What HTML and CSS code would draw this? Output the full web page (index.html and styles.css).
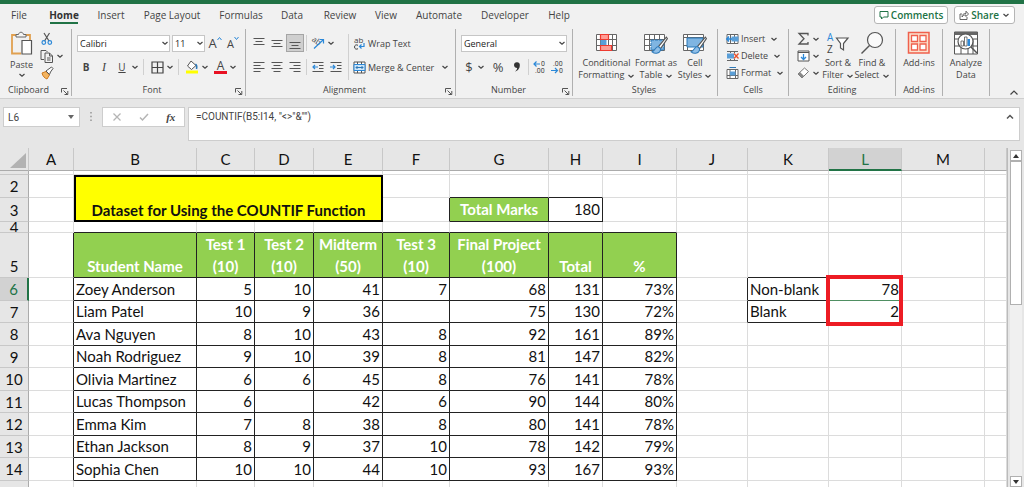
FILE: index.html
```html
<!DOCTYPE html>
<html lang="en">
<head>
<meta charset="utf-8">
<title>Workbook</title>
<link rel="stylesheet" href="styles.css">
</head>
<body>
<svg class="defs" aria-hidden="true">
  <symbol id="chev" viewBox="0 0 8 8"><path d="M1.5 3l2.5 2.3L6.500 3" fill="none" stroke="#444" stroke-width="1.2"/></symbol>
  <symbol id="launch" viewBox="0 0 8 8"><path d="M.5 5.500V1.500H6M2.500 3.500L6.500 7.500M6.800 4v3.500H3.500" fill="none" stroke="#555" stroke-width="1"/></symbol>
  <symbol id="brush" viewBox="0 0 16 18"><path d="M14.500 1L7 10l2 2 6.500-9.500z" fill="#fff" stroke="#555" stroke-width="1"/><path d="M7 10c-3 0-3 4-6 5 3 2.500 8 1.500 8-3z" fill="#8fbfe8" stroke="#2b78b8" stroke-width="1"/></symbol>
</svg>
<div class="app">
  <div class="titlebar"></div>
  <nav class="tabs">
    <button class="tab file">File</button><button class="tab home active">Home</button><button class="tab insert">Insert</button><button class="tab layout">Page Layout</button><button class="tab formulas">Formulas</button><button class="tab data">Data</button><button class="tab review">Review</button><button class="tab view">View</button><button class="tab automate">Automate</button><button class="tab developer">Developer</button><button class="tab help">Help</button>
    <div class="tab-actions">
      <button class="pill"><svg width="10" height="10" viewBox="0 0 10 10"><path d="M1 1.500h8v5.500H4.500L2.500 9V7H1z" fill="none" stroke="#217346"/></svg>Comments</button>
      <button class="pill"><svg width="10" height="10" viewBox="0 0 10 10"><path d="M3 4H1v5.500h7V7M3 7c0-2.500 1.500-3.500 4-3.500V1.200L9.500 4 7 6.500V5C5 5 4 5.500 3 7z" fill="none" stroke="#555" stroke-width=".9"/></svg>Share<svg class="chev share-chev"><use href="#chev"/></svg></button>
    </div>
  </nav>

  <div class="ribbon">
    <section class="group g-clip">
      <div class="tools">
        <button class="big paste"><svg width="24" height="26" viewBox="0 0 24 26"><path d="M7 4H2v18.500h9M15 4h5v5" fill="none" stroke="#e0a050" stroke-width="1.800"/><path d="M6 6V3.500h2.500C9 .5 13 .5 13.500 3.500H16V6z" fill="#f5f5f5" stroke="#666"/><path d="M12 9.500h9.500V23H12z" fill="#fff" stroke="#555" stroke-width="1.200"/></svg><span>Paste</span><svg class="chev"><use href="#chev"/></svg></button>
        <div class="stack">
          <button class="row"><svg width="14" height="14" viewBox="0 0 14 14"><path d="M4 1l5 8M9.500 1l-5 8" stroke="#555" stroke-width="1.200"/><circle cx="3.800" cy="10.500" r="1.800" fill="none" stroke="#2b88d8" stroke-width="1.200"/><circle cx="9.800" cy="10.500" r="1.800" fill="none" stroke="#2b88d8" stroke-width="1.200"/></svg></button>
          <button class="row"><svg width="14" height="14" viewBox="0 0 14 14"><path d="M4 10.500H1V1.500h5l1.500 1.500M5 4h4.500l3 3v6.500H5zM9.500 4v3h3M7 9h3.500M7 11h3.500" fill="none" stroke="#555"/></svg><svg class="chev"><use href="#chev"/></svg></button>
          <button class="row"><svg width="14" height="14" viewBox="0 0 14 14"><path d="M2 7l4-1.500 3.500 3.500L7 13C5 12.500 2.500 10 2 7z" fill="#f3b562" stroke="#d07a20"/><path d="M6 5l2-1.500L11.500 1 13 2.500 10.500 6 9.500 8.500z" fill="#fff" stroke="#555"/></svg></button>
        </div>
      </div>
      <footer>Clipboard<svg class="launch"><use href="#launch"/></svg></footer>
    </section>

    <section class="group g-font">
      <div class="tools rows">
        <div class="line">
          <span class="combo font-name"><select aria-label="Font"><option>Calibri</option></select><svg class="chev"><use href="#chev"/></svg></span>
          <span class="combo font-size"><select aria-label="Font size"><option>11</option></select><svg class="chev"><use href="#chev"/></svg></span>
          <button class="ib grow">A<svg width="5" height="5" viewBox="0 0 5 5"><path d="M.5 4l2-2.500 2 2.500" fill="none" stroke="#2b88d8"/></svg></button>
          <button class="ib shrink">A<svg width="5" height="5" viewBox="0 0 5 5"><path d="M.5 1l2 2.500 2-2.500" fill="none" stroke="#2b88d8"/></svg></button>
        </div>
        <div class="line">
          <button class="ib bold">B</button><button class="ib italic">I</button><button class="ib under">U</button><svg class="chev"><use href="#chev"/></svg><i class="sep"></i>
          <button class="ib"><svg width="13" height="13" viewBox="0 0 13 13"><path d="M1 1h11v11H1zM6.500 1v11M1 6.500h11" fill="none" stroke="#444" stroke-width="1.200"/></svg></button><svg class="chev"><use href="#chev"/></svg><i class="sep"></i>
          <button class="ib"><svg width="14" height="14" viewBox="0 0 14 14"><path d="M6 1l5 4.500L6.500 9.500 2.500 6z" fill="#fff" stroke="#555"/><path d="M10.500 4c1.500 1 1.500 3 1 5" fill="none" stroke="#2b78b8" stroke-width="1.500"/><path d="M1 10.500h12v3H1z" fill="#ff0"/></svg></button><svg class="chev"><use href="#chev"/></svg>
          <button class="ib color">A</button><svg class="chev"><use href="#chev"/></svg>
        </div>
      </div>
      <footer>Font<svg class="launch"><use href="#launch"/></svg></footer>
    </section>

    <section class="group g-align">
      <div class="tools">
        <div class="rows">
          <div class="line">
            <button class="ib"><svg width="12" height="12" viewBox="0 0 12 12"><path d="M.5 1.500h11M2.500 4.500h7M.5 7.500h11" stroke="#555"/></svg></button>
            <button class="ib"><svg width="12" height="12" viewBox="0 0 12 12"><path d="M.5 3.500h11M2.500 6.500h7M.5 9.500h11" stroke="#555"/></svg></button>
            <button class="ib on"><svg width="12" height="12" viewBox="0 0 12 12"><path d="M.5 5.500h11M2.500 8.500h7M.5 11.500h11" stroke="#555"/></svg></button><i class="sep"></i>
            <button class="ib"><svg width="14" height="14" viewBox="0 0 14 14"><text x="0" y="7" font-family="Open Sans" font-size="8" fill="#444" transform="rotate(35 4 6)">ab</text><path d="M3 12.500L12 4M8.500 3.500h4v4" fill="none" stroke="#2b88d8" stroke-width="1.200"/></svg></button><svg class="chev"><use href="#chev"/></svg>
          </div>
          <div class="line">
            <button class="ib"><svg width="12" height="12" viewBox="0 0 12 12"><path d="M.5 1.500h11M.5 4.500h7M.5 7.500h11M.5 10.500h7" stroke="#555"/></svg></button>
            <button class="ib"><svg width="12" height="12" viewBox="0 0 12 12"><path d="M.5 1.500h11M2.500 4.500h7M.5 7.500h11M2.500 10.500h7" stroke="#555"/></svg></button>
            <button class="ib"><svg width="12" height="12" viewBox="0 0 12 12"><path d="M.5 1.500h11M4.500 4.500h7M.5 7.500h11M4.500 10.500h7" stroke="#555"/></svg></button><i class="sep"></i>
            <button class="ib"><svg width="12" height="12" viewBox="0 0 12 12"><path d="M.5 1.500h11M7 4.500h4.500M7 7.500h4.500M.5 10.500h11" stroke="#555"/><path d="M6 6H1M3 4L1 6l2 2" fill="none" stroke="#2b88d8" stroke-width="1.200"/></svg></button>
            <button class="ib"><svg width="12" height="12" viewBox="0 0 12 12"><path d="M.5 1.500h11M7 4.500h4.500M7 7.500h4.500M.5 10.500h11" stroke="#555"/><path d="M0 6h5M3 4l2 2-2 2" fill="none" stroke="#2b88d8" stroke-width="1.200"/></svg></button>
          </div>
        </div>
        <i class="sep tall"></i>
        <div class="rows">
          <div class="line"><button class="row"><svg width="13" height="14" viewBox="0 0 13 14"><text x="1" y="7" font-family="Open Sans" font-size="8" fill="#444">ab</text><path d="M5 9.300c-1.500-1-3.500-.3-3.500 1.700s2 2.700 3.500 1.700" fill="none" stroke="#444"/><path d="M11 7v3.500H6.500M8.500 8.500l-2 2 2 2" fill="none" stroke="#2b88d8" stroke-width="1.200"/></svg>Wrap Text</button></div>
          <div class="line"><button class="row"><svg width="13" height="13" viewBox="0 0 13 13"><path d="M1 1h11v11H1zM4.500 1v3M8.500 1v3M4.500 9v3M8.500 9v3" fill="#fff" stroke="#555"/><path d="M1 3.500h11v6H1z" fill="#cfe6f8" stroke="#2b88d8"/><path d="M3 6.500h7M4.500 5L3 6.500 4.500 8M8.500 5L10 6.500 8.500 8" fill="none" stroke="#2b78b8"/></svg>Merge &amp; Center<svg class="chev far"><use href="#chev"/></svg></button></div>
        </div>
      </div>
      <footer>Alignment<svg class="launch"><use href="#launch"/></svg></footer>
    </section>

    <section class="group g-num">
      <div class="tools rows">
        <div class="line"><span class="combo format"><select aria-label="Number format"><option>General</option></select><svg class="chev"><use href="#chev"/></svg></span></div>
        <div class="line">
          <button class="ib sym">$</button><svg class="chev"><use href="#chev"/></svg><button class="ib sym pct">%</button>
          <button class="ib comma"><svg width="8" height="12" viewBox="0 0 8 12"><path d="M1 4a2.800 2.800 0 1 1 5.800.5C6.800 7.500 4.500 10 2 10.500c1.200-1 2-2 2.200-3.500C2.500 7 1 6 1 4z" fill="#333"/></svg></button><i class="sep"></i>
          <button class="ib"><svg width="14" height="14" viewBox="0 0 14 14"><text x="8" y="6" font-family="Roboto" font-size="7" fill="#444">0</text><text x="2" y="13" font-family="Roboto" font-size="7" fill="#444">.00</text><path d="M7 4H1M3.500 1.500L1 4l2.500 2.500" fill="none" stroke="#2b88d8" stroke-width="1.200"/></svg></button>
          <button class="ib"><svg width="14" height="14" viewBox="0 0 14 14"><text x="2" y="6" font-family="Roboto" font-size="7" fill="#444">.00</text><text x="8" y="13" font-family="Roboto" font-size="7" fill="#444">0</text><path d="M0 10.500h6M4 8l2.500 2.500L4 13" fill="none" stroke="#2b88d8" stroke-width="1.200"/></svg></button>
        </div>
      </div>
      <footer>Number<svg class="launch"><use href="#launch"/></svg></footer>
    </section>

    <section class="group g-styles">
      <div class="tools">
        <button class="big w-cond"><svg width="24" height="24" viewBox="0 0 24 24"><path d="M1.500 3.500h20v16h-20zM5.500 3.500v16M9.500 3.500v16M13.500 3.500v16M17.500 3.500v16M1.500 8.500h20M1.500 14.500h20" fill="#fff" stroke="#666"/><path d="M5.500 3.500h8v5h-8zM5.500 14.500h11v5h-11z" fill="#ff9c94" stroke="#ee3a30" stroke-width="1.200"/><path d="M5.500 9h6v5h-6z" fill="#5a9fd8"/></svg><span>Conditional<br>Formatting <svg class="chev"><use href="#chev"/></svg></span></button>
        <button class="big w-fmt"><svg width="26" height="24" viewBox="0 0 26 24"><path d="M1.500 3.500h20v16h-20zM6.500 3.500v16M11.500 3.500v16M16.500 3.500v16M1.500 8.500h20M1.500 14.500h20" fill="#fff" stroke="#666"/><path d="M8 9h13v10H8z" fill="#7fb5e2" stroke="#2b78b8" stroke-dasharray="3 1"/><use href="#brush" x="8" y="5" width="17" height="19"/></svg><span>Format as<br>Table <svg class="chev"><use href="#chev"/></svg></span></button>
        <button class="big w-cell"><svg width="26" height="24" viewBox="0 0 26 24"><path d="M1.500 3.500h20v16h-20zM5.500 3.500v16M1.500 6.500h20M1.500 14.500h20" fill="#fff" stroke="#666"/><path d="M5 7h16v9H5z" fill="#7fb5e2" stroke="#2b78b8"/><use href="#brush" x="8" y="5" width="17" height="19"/></svg><span>Cell<br>Styles <svg class="chev"><use href="#chev"/></svg></span></button>
      </div>
      <footer>Styles</footer>
    </section>

    <section class="group g-cells">
      <div class="tools">
        <div class="stack">
          <button class="row"><svg width="13" height="12" viewBox="0 0 13 12"><path d="M1 1.500h11v9H1zM4.500 1.500v9M8.500 1.500v9" fill="#fff" stroke="#666"/><path d="M5.500 3.500h7v5h-7z" fill="#5a9fd8"/><path d="M6 6H1M3 3.500L.8 6 3 8.500" fill="none" stroke="#2b88d8" stroke-width="1.500"/></svg>Insert<svg class="chev"><use href="#chev"/></svg></button>
          <button class="row"><svg width="13" height="12" viewBox="0 0 13 12"><path d="M1 1.500h11M1 10.500h11M4.500 1v2M8.500 1v2M4.500 9v2M8.500 9v2" fill="none" stroke="#666"/><path d="M1 3.500h7v5H1z" fill="#5a9fd8"/><path d="M8 3.500l4.500 5M12.500 3.500L8 8.500" stroke="#e8502c" stroke-width="1.300"/></svg>Delete<svg class="chev"><use href="#chev"/></svg></button>
          <button class="row"><svg width="13" height="12" viewBox="0 0 13 12"><path d="M1 2.500h11v9H1zM4 2v9M9.500 2v9M1 8.500h11" fill="#fff" stroke="#666"/><path d="M4 4.500h5.500v4H4z" fill="#5a9fd8"/><path d="M3.500.5h6.500" stroke="#2b78b8"/></svg>Format<svg class="chev"><use href="#chev"/></svg></button>
        </div>
      </div>
      <footer>Cells</footer>
    </section>

    <section class="group g-edit">
      <div class="tools">
        <div class="stack">
          <button class="row"><svg width="13" height="14" viewBox="0 0 13 14"><path d="M11 3.500V1.500H2l5 5.300L2 12h9v-2" fill="none" stroke="#555" stroke-width="1.300"/></svg><svg class="chev"><use href="#chev"/></svg></button>
          <button class="row"><svg width="13" height="12" viewBox="0 0 13 12"><path d="M1 1h11v10H1zM1 2.500h11" fill="#fff" stroke="#555"/><path d="M6.500 4v5.500M4 7l2.500 2.500L9 7" fill="none" stroke="#2b88d8" stroke-width="1.300"/></svg><svg class="chev"><use href="#chev"/></svg></button>
          <button class="row"><svg width="13" height="12" viewBox="0 0 13 12"><path d="M1 7l6.500-6 4 3.500L5 11z" fill="#fff" stroke="#777"/><path d="M1 7l2-2 4 4-2 2z" fill="#888"/></svg><svg class="chev"><use href="#chev"/></svg></button>
        </div>
        <button class="big w-sort"><svg width="24" height="24" viewBox="0 0 24 24"><text x="1" y="10" font-family="Open Sans" font-size="10" fill="#2b88d8">A</text><text x="1" y="22" font-family="Open Sans" font-size="10" fill="#444">Z</text><path d="M10.500 7h11.500l-4.500 5.500V19l-3-2v-4.500z" fill="#fff" stroke="#555" stroke-width="1.200"/></svg><span>Sort &amp;<br>Filter <svg class="chev"><use href="#chev"/></svg></span></button>
        <button class="big w-find"><svg width="26" height="24" viewBox="0 0 26 24"><circle cx="16" cy="9" r="7.500" fill="#fafafa" stroke="#555" stroke-width="1.200"/><path d="M10.500 14.500L2.500 22.500" stroke="#555" stroke-width="1.400"/></svg><span>Find &amp;<br>Select <svg class="chev"><use href="#chev"/></svg></span></button>
      </div>
      <footer>Editing</footer>
    </section>

    <section class="group g-add">
      <div class="tools"><button class="big w-add"><svg width="24" height="24" viewBox="0 0 24 24"><path d="M1.500 1.500h20.500v20.500H1.500z" fill="#fbe3cf" stroke="#f0604c" stroke-width="1.500"/><path d="M4.500 4.500h6v6h-6zM13 4.500h6v6h-6zM4.500 13h6v6h-6zM13 13h6v6h-6z" fill="#fff" stroke="#f0604c" stroke-width="1.300"/></svg><span>Add-ins</span></button></div>
      <footer>Add-ins</footer>
    </section>

    <section class="group g-analyze">
      <div class="tools"><button class="big w-add"><svg width="26" height="24" viewBox="0 0 26 24"><path d="M1.500 1h23v22h-23zM1.500 8h23M1.500 15h23M8 15v8M15 15v8M20 8v15" fill="#fff" stroke="#555"/><path d="M1.500 1h23v3h-23z" fill="#666"/><circle cx="12.500" cy="10.500" r="7.500" fill="#fff" stroke="#555" stroke-width="1.200"/><path d="M8 10h2.500v5H8zM11.500 6h2.500v9h-2.500z" fill="#fff" stroke="#555" stroke-width=".8"/><path d="M14.500 8H17v7h-2.500z" fill="#2b88d8"/><path d="M18 16l6 6" stroke="#555" stroke-width="1.500"/></svg><span>Analyze<br>Data</span></button></div>
      <footer></footer>
    </section>
    <button class="collapse" aria-label="Collapse ribbon"><svg width="8" height="6" viewBox="0 0 8 6"><path d="M.5 4.500L4 1l3.500 3.500" fill="none" stroke="#444" stroke-width="1.200"/></svg></button>
  </div>

  <div class="formula-bar">
    <div class="namebox"><input aria-label="Name box" value="L6"><svg width="6" height="4" viewBox="0 0 6 4"><path d="M0 0h6L3 4z" fill="#666"/></svg></div>
    <svg class="dots" width="2" height="9" viewBox="0 0 2 9"><path d="M0 0h2v1.500H0zM0 3.700h2v1.500H0zM0 7.400h2v1.500H0z" fill="#aaa"/></svg>
    <div class="fx">
      <button aria-label="Cancel"><svg width="10" height="10" viewBox="0 0 10 10"><path d="M1.500 1.500l7 7M8.500 1.500l-7 7" stroke="#b5b5b5" stroke-width="1.300"/></svg></button>
      <button aria-label="Enter"><svg width="10" height="10" viewBox="0 0 10 10"><path d="M1 5.500L3.500 8 9 2" fill="none" stroke="#b5b5b5" stroke-width="1.500"/></svg></button>
      <button class="fn">fx</button>
    </div>
    <div class="formula"><textarea aria-label="Formula">=COUNTIF(B5:I14, "&lt;&gt;"&amp;"")</textarea><svg width="8" height="6" viewBox="0 0 8 6"><path d="M1 4.500L4 1.500l3 3" fill="none" stroke="#555" stroke-width="1.500"/></svg></div>
  </div>

  <div class="sheet">
    <table>
      <colgroup><col class="c-num"><col class="c-a"><col class="c-b"><col class="c-c"><col class="c-d"><col class="c-e"><col class="c-f"><col class="c-g"><col class="c-h"><col class="c-i"><col class="c-j"><col class="c-k"><col class="c-l"><col class="c-m"><col></colgroup>
      <thead><tr><th><svg width="16" height="15" viewBox="0 0 16 15"><path d="M16 0v15H0z" fill="#b2b2b2"/></svg></th><th>A</th><th>B</th><th>C</th><th>D</th><th>E</th><th>F</th><th>G</th><th>H</th><th>I</th><th>J</th><th>K</th><th class="sel">L</th><th>M</th><th></th></tr></thead>
      <tbody>
      <tr class="sliver"><th></th><td></td><td></td><td></td><td></td><td></td><td></td><td></td><td></td><td></td><td></td><td></td><td></td><td></td><td></td></tr>
      <tr class="odd"><th>2</th><td></td><td class="title" colspan="4" rowspan="2">Dataset for Using the COUNTIF Function</td><td></td><td class="kb"></td><td class="kb"></td><td></td><td></td><td></td><td></td><td></td><td></td></tr>
      <tr class="r3"><th>3</th><td></td><td class="kr"></td><td class="head kr kb mid">Total Marks</td><td class="kr kb">180</td><td></td><td></td><td></td><td></td><td></td><td></td></tr>
      <tr class="r4"><th><span>4</span></th><td></td><td class="kb"></td><td class="kb"></td><td class="kb"></td><td class="kb"></td><td class="kb"></td><td class="kb"></td><td class="kb"></td><td class="kb"></td><td></td><td></td><td></td><td></td><td></td></tr>
      <tr class="rec hrow"><th>5</th><td></td><td>Student Name</td><td>Test 1<br>(10)</td><td>Test 2<br>(10)</td><td>Midterm<br>(50)</td><td>Test 3<br>(10)</td><td>Final Project<br>(100)</td><td>Total</td><td>%</td><td></td><td class="kb"></td><td></td><td></td><td></td></tr>
      <tr class="rec odd"><th class="sel">6</th><td></td><td>Zoey Anderson</td><td>5</td><td>10</td><td>41</td><td>7</td><td>68</td><td>131</td><td>73%</td><td class="kr"></td><td class="name kr kb">Non-blank</td><td class="result">78<span class="marker"></span></td><td></td><td></td></tr>
      <tr class="rec"><th>7</th><td></td><td>Liam Patel</td><td>10</td><td>9</td><td>36</td><td></td><td>75</td><td>130</td><td>72%</td><td class="kr"></td><td class="name kr kb">Blank</td><td>2</td><td></td><td></td></tr>
      <tr class="rec odd"><th>8</th><td></td><td>Ava Nguyen</td><td>8</td><td>10</td><td>43</td><td>8</td><td>92</td><td>161</td><td>89%</td><td></td><td></td><td></td><td></td><td></td></tr>
      <tr class="rec"><th>9</th><td></td><td>Noah Rodriguez</td><td>9</td><td>10</td><td>39</td><td>8</td><td>81</td><td>147</td><td>82%</td><td></td><td></td><td></td><td></td><td></td></tr>
      <tr class="rec odd"><th>10</th><td></td><td>Olivia Martinez</td><td>6</td><td>6</td><td>45</td><td>8</td><td>76</td><td>141</td><td>78%</td><td></td><td></td><td></td><td></td><td></td></tr>
      <tr class="rec"><th>11</th><td></td><td>Lucas Thompson</td><td>6</td><td></td><td>42</td><td>6</td><td>90</td><td>144</td><td>80%</td><td></td><td></td><td></td><td></td><td></td></tr>
      <tr class="rec odd"><th>12</th><td></td><td>Emma Kim</td><td>7</td><td>8</td><td>38</td><td>8</td><td>80</td><td>141</td><td>78%</td><td></td><td></td><td></td><td></td><td></td></tr>
      <tr class="rec"><th>13</th><td></td><td>Ethan Jackson</td><td>8</td><td>9</td><td>37</td><td>10</td><td>78</td><td>142</td><td>79%</td><td></td><td></td><td></td><td></td><td></td></tr>
      <tr class="rec odd"><th>14</th><td></td><td>Sophia Chen</td><td>10</td><td>10</td><td>44</td><td>10</td><td>93</td><td>167</td><td>93%</td><td></td><td></td><td></td><td></td><td></td></tr>
      <tr><th>15</th><td></td><td></td><td></td><td></td><td></td><td></td><td></td><td></td><td></td><td></td><td></td><td></td><td></td><td></td></tr>
      </tbody>
    </table>
    <div class="scroll">
      <button aria-label="Scroll up"><svg width="6" height="4" viewBox="0 0 6 4"><path d="M0 4h6L3 0z" fill="#333"/></svg></button>
      <div class="thumb"></div>
      <div class="track"></div>
      <button aria-label="Scroll down"><svg width="6" height="4" viewBox="0 0 6 4"><path d="M0 0h6L3 4z" fill="#333"/></svg></button>
    </div>
  </div>
</div>
</body>
</html>
```
FILE: styles.css
```css
* { box-sizing: border-box; }
body { margin: 0; font-family: "Open Sans", sans-serif; font-size: 9px; color: #444; background: #e6e6e6; }
button, select, input, textarea { font: inherit; color: inherit; border: 0; padding: 0; margin: 0; background: none; border-radius: 0; }
button { display: flex; align-items: center; white-space: nowrap; }
svg { display: block; flex: none; overflow: visible; }
.defs { position: absolute; width: 0; height: 0; }
.app { height: 100vh; display: flex; flex-direction: column; overflow: hidden; }
.titlebar { height: 4px; background: #217346; flex: none; }

.tabs { display: flex; height: 24px; flex: none; background: #f1f1f1; font-size: 10px; padding-left: 3px; }
.tab { justify-content: center; height: 20px; padding-top: 3px; border-bottom: 2px solid transparent; }
.file { width: 32px; }
.home { width: 28px; margin: 0 17px 0 15px; }
.active { font-weight: 700; color: #333; border-color: #217346; }
.insert { width: 32px; }
.layout { width: 90px; }
.formulas { width: 48px; }
.data { width: 54px; }
.review { width: 42px; }
.view { width: 50px; }
.automate { width: 56px; }
.developer { width: 76px; }
.help { width: 32px; }
.tab-actions { display: flex; gap: 6px; margin: 2px 9px 4px auto; }
.pill { gap: 2px; padding: 0 4px; background: #fff; border: 1px solid #b5b5b5; border-radius: 3px; color: #217346; font-weight: 600; }
.share-chev { margin-left: 1px; }

.ribbon { display: flex; flex: none; height: 71px; background: #f1f1f1; border-bottom: 1px solid #cfcfcf; padding-top: 1px; }
.group { display: flex; flex-direction: column; border-right: 1px solid #b0b0b0; height: 67px; flex: none; }
.tools { display: flex; height: 57px; }
.group footer { height: 12px; line-height: 12px; text-align: center; position: relative; }
.launch { width: 8px; height: 8px; position: absolute; right: 2px; bottom: 1px; }
.chev { width: 8px; height: 8px; }
.big { flex-direction: column; line-height: 12px; padding-top: 2px; }
.big span { display: block; text-align: center; padding-top: 2px; }
.big span .chev { display: inline-block; vertical-align: middle; }
.stack { display: flex; flex-direction: column; padding-top: 1px; }
.row { height: 17px; gap: 2px; }
.rows { display: flex; flex-direction: column; padding-top: 5px; gap: 6px; }
.line { display: flex; align-items: center; height: 18px; }
.ib { width: 18px; height: 18px; justify-content: center; }
.on { background: #cfcfcf; border: 1px solid #a5a5a5; }
.sep { width: 1px; height: 16px; margin: 0 4px; background: #d0d0d0; }
.combo { display: flex; align-items: center; height: 17px; background: #fff; border: 1px solid #c6c6c6; padding-left: 2px; color: #222; }
.combo select { appearance: none; flex: 1; min-width: 0; }
.font-name { width: 93px; margin-right: 2px; }
.font-size { width: 33px; margin-right: 1px; }
.grow { font-size: 13px; align-items: center; }
.shrink { font-size: 11px; }
.grow svg, .shrink svg { align-self: flex-start; margin-top: 2px; }
.bold { font-weight: 700; font-size: 10px; }
.italic { font-style: italic; font-family: "Liberation Serif", serif; font-size: 12px; }
.under { text-decoration: underline; font-size: 10px; }
.color { width: 13px; height: 14px; margin: 0 2px 0 5px; font-size: 12px; line-height: 10px; border-bottom: 3px solid #e81123; }
.sym { font-size: 13px; width: 16px; }
.pct { width: 20px; margin-left: 3px; }

.g-clip { width: 72px; }
.g-clip .paste { width: 37px; margin-left: 3px; }
.g-clip footer { padding-right: 14px; }
.g-font { width: 174px; padding-left: 5px; }
.g-font footer { padding-right: 18px; }
.g-align { width: 210px; padding-left: 4px; }
.g-align .sep { margin: 0 2px; }
.g-align .tall { height: 46px; margin: 5px 4px 0 3px; }
.far { margin-left: 5px; }
.g-align footer { padding-right: 16px; }
.g-num { width: 117px; padding-left: 5px; }
.g-num .sep { margin: 0 2px; }
.g-num footer { padding-right: 16px; }
.format { width: 106px; }
.g-styles { width: 145px; padding-left: 6px; }
.g-styles footer, .g-cells footer, .g-edit footer { padding-right: 8px; }
.w-cond { width: 55px; }
.w-fmt { width: 44px; }
.w-cell { width: 34px; }
.g-cells { width: 71px; padding-left: 8px; }
.g-cells .row .chev { margin-left: 3px; }
.g-edit { width: 107px; padding-left: 8px; }
.w-sort { width: 36px; }
.w-find { width: 32px; }
.g-add { width: 47px; }
.g-analyze { width: 47px; }
.w-add { width: 46px; }
.collapse { margin: auto 6px 2px auto; }

.formula-bar { display: flex; flex: none; height: 49px; padding: 8px 4px 0 3px; align-items: flex-start; font-family: Roboto, sans-serif; font-size: 10px; }
.namebox, .fx, .formula { display: flex; background: #fff; border: 1px solid #cdcdcd; }
.namebox { width: 77px; height: 20px; align-items: center; padding: 0 5px 0 4px; }
.namebox input { flex: 1; min-width: 0; }
.dots { margin: 5px 10px 0; }
.fx { width: 83px; height: 20px; justify-content: space-around; }
.fn { font: italic 700 11px "Liberation Serif", serif; }
.formula { flex: 1; height: 34px; margin-left: 3px; padding: 3px 5px 0 7px; }
.formula textarea { flex: 1; height: 26px; resize: none; line-height: 12px; overflow: hidden; }
.formula > svg { margin-top: 3px; }

.sheet { display: flex; flex: 1; min-height: 0; align-items: flex-start; font-family: Lato, sans-serif; font-size: 15px; color: #111; }
.sheet table { flex: 1; width: 0; table-layout: fixed; border-collapse: separate; border-spacing: 0; background: #fff; border-right: 1px solid #bbb; }
.c-num { width: 29px; } .c-a { width: 45px; } .c-b { width: 123px; } .c-c { width: 58px; } .c-d { width: 59px; }
.c-e { width: 69px; } .c-f { width: 67px; } .c-g { width: 99px; } .c-h { width: 54px; } .c-i { width: 74px; }
.c-j { width: 71px; } .c-k { width: 81px; } .c-l { width: 73px; } .c-m { width: 83px; }
.sheet th { background: #e6e6e6; font-weight: 400; padding: 0; line-height: 18px; border-right: 1px solid #c8c8c8; border-bottom: 1px solid #c8c8c8; overflow: hidden; }
.sheet thead th { height: 23px; border-bottom-color: #ababab; }
.sheet thead svg { margin: 3px 2px 0 auto; }
.sheet tbody th { border-right-color: #ababab; }
.sheet .sel { background: #d2d2d2; color: #217346; }
.sheet thead .sel { border-bottom: 2px solid #217346; }
.sheet tbody .sel { border-right: 2px solid #217346; }
.sheet td { padding: 0 2px 1px; text-align: right; line-height: 18px; border-right: 1px solid #dcdcdc; border-bottom: 1px solid #dcdcdc; white-space: nowrap; }
.sheet tbody tr { height: 22px; }
.sheet .odd { height: 23px; }
.sheet .sliver { height: 4px; }
.sheet .sliver td { line-height: 1px; }
.sheet .r3 { height: 24px; }
.sheet .r4 { height: 11px; }
.sheet .r4 td { line-height: 8px; }
.r4 span { display: flex; height: 10px; align-items: center; justify-content: center; overflow: hidden; line-height: 10px; }
.sheet .hrow { height: 45px; }
.sheet .kr { border-right-color: #222; }
.sheet .kb { border-bottom-color: #222; }
.rec td:nth-child(n+2):nth-child(-n+10) { border-right-color: #222; }
.rec td:nth-child(n+3):nth-child(-n+10) { border-bottom-color: #222; }
.rec td:nth-child(3), .sheet .name { text-align: left; }
.sheet .title { background: #ff0; border: 2px solid #000; font-weight: 700; text-align: center; vertical-align: bottom; }
.head, .hrow td:nth-child(n+3):nth-child(-n+10) { background: #92d050; color: #fff; font-weight: 700; }
.sheet .mid { text-align: center; }
.hrow td:nth-child(n+3):nth-child(-n+10) { text-align: center; vertical-align: bottom; line-height: 22px; padding: 0; }
.sheet .hrow th { vertical-align: bottom; padding-bottom: 2px; }
.sheet .result { position: relative; border-bottom-color: #4f8f62; }
.marker { position: absolute; inset: -3px -2px -26px -3px; border: 4px solid #ed1c24; }
.scroll { display: flex; flex-direction: column; width: 16px; align-self: stretch; padding: 2px 2px 0; background: #e6e6e6; }
.scroll button { height: 11px; flex: none; justify-content: center; background: #fff; border: 1px solid #b0b0b0; }
.thumb { height: 144px; background: #fff; border: 1px solid #b0b0b0; }
.track { flex: 1; background: #f0f0f0; }
```
